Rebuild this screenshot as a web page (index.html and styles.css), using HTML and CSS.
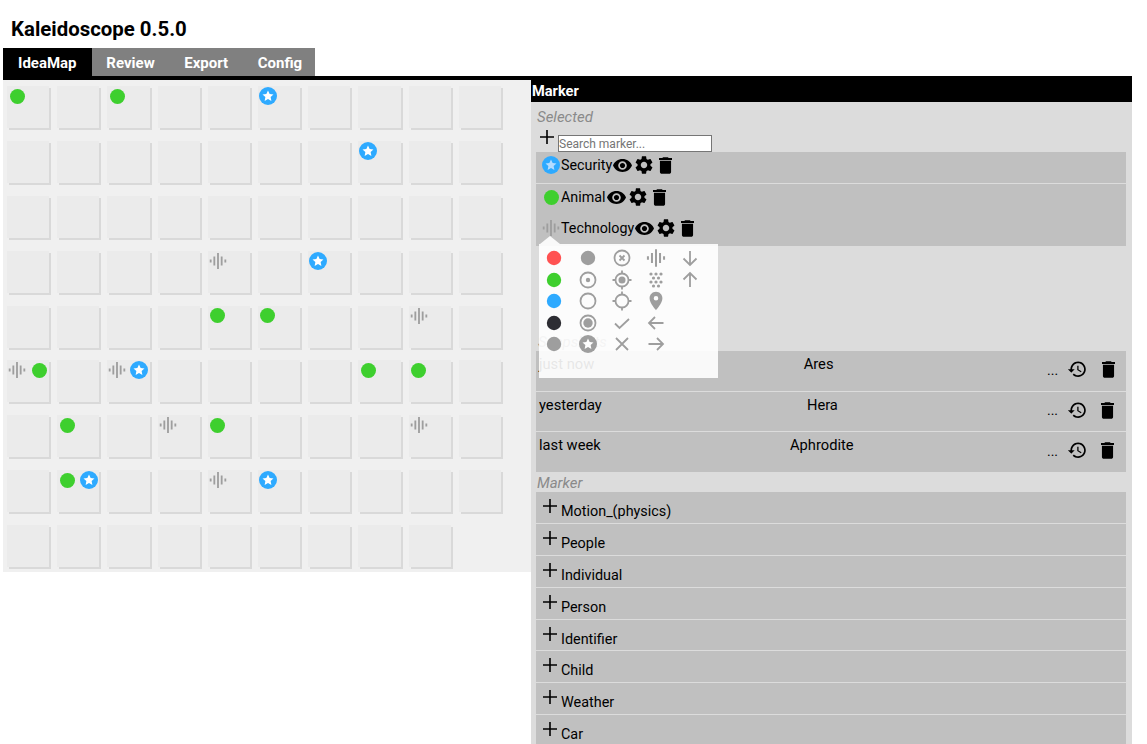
FILE: index.html
```html
<!DOCTYPE html>
<html lang="en">
<head>
    <meta charset="UTF-8">
    <meta name="viewport" content="width=device-width, initial-scale=1.0">
    <title>Kaleidoscope 0.5.0</title>

    <link rel="stylesheet" href="styles.css">

</head>
<body>

    <!-- Shared icons -->
    <svg class="sprite" xmlns="http://www.w3.org/2000/svg">
        <symbol id="i-star" viewBox="0 0 24 24"><circle cx="12" cy="12" r="12"/><path class="star-in" d="M12 4.600l2.200 4.700 5.100.6-3.800 3.500 1 5.100-4.500-2.500-4.500 2.500 1-5.100-3.800-3.500 5.100-.6z"/></symbol>
        <symbol id="i-wave" viewBox="0 0 24 24"><path d="M2.100 10.200h2.200v3.600H2.100zM6.500 6.500h2.200v11H6.500zM10.900 2.500h2.200v19h-2.200zM15.300 6.500h2.200v11h-2.200zM19.700 10.200h2.200v3.600h-2.200z"/></symbol>
        <symbol id="i-eye" viewBox="1 4.500 22 15"><path d="M12 4.500C7 4.500 2.730 7.610 1 12c1.730 4.390 6 7.500 11 7.500s9.270-3.110 11-7.500c-1.730-4.390-6-7.500-11-7.500zM12 17c-2.760 0-5-2.240-5-5s2.240-5 5-5 5 2.240 5 5-2.240 5-5 5zm0-8c-1.660 0-3 1.340-3 3s1.340 3 3 3 3-1.340 3-3-1.340-3-3-3z"/></symbol>
        <symbol id="i-gear" viewBox="2.300 2 19.400 20"><path d="M19.140 12.940c.04-.3.06-.61.06-.94 0-.32-.02-.64-.07-.94l2.030-1.580c.18-.14.23-.41.12-.61l-1.920-3.320c-.12-.22-.37-.29-.59-.22l-2.390.96c-.5-.38-1.030-.7-1.620-.94l-.36-2.540c-.04-.24-.24-.41-.48-.41h-3.840c-.24 0-.43.17-.47.41l-.36 2.540c-.59.24-1.130.57-1.620.94l-2.390-.96c-.22-.08-.47 0-.59.22L2.740 8.870c-.12.21-.08.47.12.61l2.030 1.580c-.05.3-.09.63-.09.94s.02.64.07.94l-2.030 1.580c-.18.14-.23.41-.12.61l1.920 3.320c.12.22.37.29.59.22l2.390-.96c.5.38 1.030.7 1.620.94l.36 2.540c.05.24.24.41.48.41h3.840c.24 0 .44-.17.47-.41l.36-2.540c.59-.24 1.130-.56 1.620-.94l2.390.96c.22.08.47 0 .59-.22l1.920-3.320c.12-.22.07-.47-.12-.61l-2.010-1.580zM12 15.600c-1.980 0-3.600-1.620-3.600-3.600s1.620-3.600 3.600-3.600 3.600 1.620 3.600 3.600-1.620 3.600-3.600 3.600z"/></symbol>
        <symbol id="i-trash" viewBox="5 3 14 18"><path d="M6 19c0 1.100.9 2 2 2h8c1.100 0 2-.9 2-2V7H6v12zM19 4h-3.500l-1-1h-5l-1 1H5v2h14V4z"/></symbol>
        <symbol id="i-history" viewBox="0 0 24 24"><path d="M13 3c-4.970 0-9 4.030-9 9H1l3.890 3.890.07.14L9 12H6c0-3.870 3.130-7 7-7s7 3.130 7 7-3.130 7-7 7c-1.930 0-3.680-.79-4.940-2.060l-1.420 1.420C8.270 19.990 10.510 21 13 21c4.970 0 9-4.030 9-9s-4.030-9-9-9zm-1 5v5l4.280 2.540.72-1.210-3.500-2.080V8H12z"/></symbol>
        <symbol id="i-plus" viewBox="0 0 16 16"><path d="M7.200 1h1.600v6.200H15v1.600H8.800V15H7.200V8.800H1V7.200h6.200z"/></symbol>
    </svg>

    <h1 class="title">Kaleidoscope 0.5.0</h1>

    <nav class="tabs">
        <a class="tab tab-active">IdeaMap</a>
        <a class="tab">Review</a>
        <a class="tab">Export</a>
        <a class="tab">Config</a>
    </nav>

    <div class="main">
        <!-- Idea grid, tiles are inserted by JavaScript -->
        <div class="board" id="board"></div>

        <div class="side">
            <div class="side-head">Marker</div>
            <div class="side-body">
                <div class="label">Selected</div>
                <div class="search-row">
                    <svg class="icon-plus"><use href="#i-plus"/></svg>
                    <input class="search" type="text" placeholder="Search marker...">
                </div>

                <div class="selected-list">
                    <div class="selected-row sep">
                        <span class="ic-box"><svg class="mark-star"><use href="#i-star"/></svg></span>
                        <span>Security</span>
                        <svg class="act-eye"><use href="#i-eye"/></svg>
                        <svg class="act-gear"><use href="#i-gear"/></svg>
                        <svg class="act-trash"><use href="#i-trash"/></svg>
                    </div>
                    <div class="selected-row">
                        <span class="ic-box"><i class="dot"></i></span>
                        <span>Animal</span>
                        <svg class="act-eye"><use href="#i-eye"/></svg>
                        <svg class="act-gear"><use href="#i-gear"/></svg>
                        <svg class="act-trash"><use href="#i-trash"/></svg>
                    </div>
                    <div class="selected-row">
                        <span class="ic-box"><svg class="mark-wave"><use href="#i-wave"/></svg></span>
                        <span>Technology</span>
                        <svg class="act-eye"><use href="#i-eye"/></svg>
                        <svg class="act-gear"><use href="#i-gear"/></svg>
                        <svg class="act-trash"><use href="#i-trash"/></svg>
                    </div>

                    <!-- Marker shape picker -->
                    <div class="picker">
                        <svg viewBox="0 0 22 22"><circle cx="11" cy="11" r="7.200" fill="#ff5252"/></svg>
                        <svg viewBox="0 0 22 22"><circle cx="11" cy="11" r="7.200" fill="#9e9e9e"/></svg>
                        <svg class="p" viewBox="0 0 22 22"><circle cx="11" cy="11" r="7.500"/><path d="M8.500 8.500l5 5M13.500 8.500l-5 5"/></svg>
                        <svg class="p-fill" viewBox="0 0 24 24"><use href="#i-wave"/></svg>
                        <svg class="p" viewBox="0 0 22 22"><path d="M11 4v14M4.500 11.500l6.500 6.500 6.500-6.500"/></svg>

                        <svg viewBox="0 0 22 22"><circle cx="11" cy="11" r="7.200" fill="#3ecf2e"/></svg>
                        <svg class="p" viewBox="0 0 22 22"><circle cx="11" cy="11" r="7.500"/><circle class="solid" cx="11" cy="11" r="2.200"/></svg>
                        <svg class="p" viewBox="0 0 22 22"><circle cx="11" cy="11" r="6.500"/><circle class="solid" cx="11" cy="11" r="3.500"/><path d="M11 1.500v3M11 17.500v3M1.500 11h3M17.500 11h3"/></svg>
                        <svg class="p-fill" viewBox="0 0 22 22"><circle cx="6" cy="5" r="1.600"/><circle cx="11" cy="5" r="1.600"/><circle cx="16" cy="5" r="1.600"/><circle cx="8.500" cy="9" r="1.600"/><circle cx="13.500" cy="9" r="1.600"/><circle cx="6" cy="13" r="1.600"/><circle cx="11" cy="13" r="1.600"/><circle cx="16" cy="13" r="1.600"/><circle cx="8.500" cy="17" r="1.600"/><circle cx="13.500" cy="17" r="1.600"/></svg>
                        <svg class="p" viewBox="0 0 22 22"><path d="M11 18V4M4.500 10.500L11 4l6.500 6.500"/></svg>

                        <svg viewBox="0 0 22 22"><circle cx="11" cy="11" r="7.200" fill="#2eaaff"/></svg>
                        <svg class="p" viewBox="0 0 22 22"><circle cx="11" cy="11" r="7.500"/></svg>
                        <svg class="p" viewBox="0 0 22 22"><circle cx="11" cy="11" r="6.500"/><path d="M11 1.500v3M11 17.500v3M1.500 11h3M17.500 11h3"/></svg>
                        <svg class="p-fill" viewBox="0 0 24 24"><path d="M12 2C8.130 2 5 5.130 5 9c0 5.250 7 13 7 13s7-7.750 7-13c0-3.870-3.130-7-7-7zm0 9.500a2.500 2.500 0 1 1 0-5 2.500 2.500 0 0 1 0 5z"/></svg>
                        <span></span>

                        <svg viewBox="0 0 22 22"><circle cx="11" cy="11" r="7.200" fill="#2d2d33"/></svg>
                        <svg class="p" viewBox="0 0 22 22"><circle cx="11" cy="11" r="7.500"/><circle class="solid" cx="11" cy="11" r="4.700"/></svg>
                        <svg class="p" viewBox="0 0 22 22"><path d="M4 11.500l4.500 4.500L18 7"/></svg>
                        <svg class="p" viewBox="0 0 22 22"><path d="M18.500 11H4M10 5l-6 6 6 6"/></svg>
                        <span></span>

                        <svg viewBox="0 0 22 22"><circle cx="11" cy="11" r="7.200" fill="#9e9e9e"/></svg>
                        <svg class="p-star" viewBox="0 0 24 24"><use href="#i-star"/></svg>
                        <svg class="p" viewBox="0 0 22 22"><path d="M5 5l12 12M17 5L5 17"/></svg>
                        <svg class="p" viewBox="0 0 22 22"><path d="M3.500 11H18M12 5l6 6-6 6"/></svg>
                        <span></span>
                    </div>
                </div>

                <div class="label label-snapshots">Snapshots</div>
                <div class="snap-list">
                    <div class="snap-row sep">
                        <span class="snap-text">just now</span>
                        <span class="snap-text">Ares</span>
                        <div class="snap-actions">
                            <span class="snap-more">...</span>
                            <svg class="act-history"><use href="#i-history"/></svg>
                            <svg class="act-trash"><use href="#i-trash"/></svg>
                        </div>
                    </div>
                    <div class="snap-row sep">
                        <span class="snap-text">yesterday</span>
                        <span class="snap-text">Hera</span>
                        <div class="snap-actions">
                            <span class="snap-more">...</span>
                            <svg class="act-history"><use href="#i-history"/></svg>
                            <svg class="act-trash"><use href="#i-trash"/></svg>
                        </div>
                    </div>
                    <div class="snap-row">
                        <span class="snap-text">last week</span>
                        <span class="snap-text">Aphrodite</span>
                        <div class="snap-actions">
                            <span class="snap-more">...</span>
                            <svg class="act-history"><use href="#i-history"/></svg>
                            <svg class="act-trash"><use href="#i-trash"/></svg>
                        </div>
                    </div>
                </div>

                <div class="label label-marker">Marker</div>
                <div id="markerList"></div>
            </div>
        </div>
    </div>

    <script>
        // Which markers sit on which tile, "row,col": [...]
        const placed = {
            "0,0": ["dot"], "0,2": ["dot"], "0,5": ["star"],
            "1,7": ["star"],
            "3,4": ["wave"], "3,6": ["star"],
            "4,4": ["dot"], "4,5": ["dot"], "4,8": ["wave"],
            "5,0": ["wave", "dot"], "5,2": ["wave", "star"], "5,7": ["dot"], "5,8": ["dot"],
            "6,1": ["dot"], "6,3": ["wave"], "6,4": ["dot"], "6,8": ["wave"],
            "7,1": ["dot", "star"], "7,4": ["wave"], "7,5": ["star"]
        };

        const marks = {
            dot: '<span class="ic-box"><i class="dot"></i></span>',
            star: '<span class="ic-box"><svg class="mark-star"><use href="#i-star"/></svg></span>',
            wave: '<span class="ic-box"><svg class="mark-wave"><use href="#i-wave"/></svg></span>'
        };

        const board = document.getElementById("board");
        for (let r = 0; r < 9; r++) {
            for (let c = 0; c < 10; c++) {
                if (r === 8 && c === 9) continue;
                const tile = document.createElement("div");
                tile.className = "tile";
                tile.innerHTML = (placed[r + "," + c] || []).map(m => marks[m]).join("");
                board.appendChild(tile);
            }
        }

        const names = ["Motion_(physics)", "People", "Individual", "Person", "Identifier", "Child", "Weather", "Car"];
        const markerList = document.getElementById("markerList");
        names.forEach(name => {
            const row = document.createElement("div");
            row.className = "marker-row";
            row.innerHTML = `<svg class="icon-plus"><use href="#i-plus"/></svg><span>${name}</span>`;
            markerList.appendChild(row);
        });
    </script>
</body>
</html>
```

FILE: styles.css
```css
html, body {
    height: 100%;
    overflow: hidden;
}

body {
    font-family: Roboto, "Noto Sans", sans-serif;
    font-size: 14.3px;
    color: #000;
    background-color: #fff;
    margin: 0;
    padding: 0 15px 0 3px;
}

.sprite {
    display: none;
}

.title {
    font-size: 20.4px;
    font-weight: 700;
    line-height: 24px;
    margin: 0;
    padding: 17px 0 7px 8px;
}

.tabs {
    display: flex;
    width: 312px;
    height: 28px;
    background-color: #808080;
}

.tab {
    color: #fff;
    font-size: 15px;
    font-weight: 700;
    line-height: 31px;
    padding: 0 14.8px;
}

.tab-active {
    background-color: #000;
    padding: 0 15px;
}

.main {
    display: flex;
    align-items: flex-start;
    border-top: 4px solid #000;
}

.board {
    width: 528px;
    box-sizing: border-box;
    padding: 6px 0 0 4px;
    height: 492px;
    flex: none;
    display: grid;
    grid-template-columns: repeat(10, 44.2px);
    grid-auto-rows: 44px;
    column-gap: 6px;
    row-gap: 10.9px;
    background-color: #f0f0f0;
}

.tile {
    display: flex;
    gap: 2px;
    align-items: flex-start;
    margin: 0 2px 2px 0;
    background-color: #ebebeb;
    box-shadow: 2px 2px 0 #d9d9d9;
}

.ic-box {
    width: 20px;
    height: 20px;
    flex: none;
    display: flex;
    align-items: center;
    justify-content: center;
}

.dot {
    display: block;
    width: 15px;
    height: 15px;
    border-radius: 50%;
    background-color: #3ecf2e;
}

.star-in {
    fill: var(--star, #fff);
}

.mark-star {
    width: 18px;
    height: 18px;
    fill: #2eaaff;
}

.mark-wave {
    width: 20px;
    height: 20px;
    fill: #9e9e9e;
}

.side {
    flex: 1;
    margin-top: -4px;
    background-color: #dcdcdc;
}

.side-head {
    background-color: #000;
    color: #fff;
    font-size: 14.6px;
    font-weight: 700;
    line-height: 22px;
    padding: 4px 0 0 1px;
}

.side-body {
    padding: 0 6px 0 5px;
}

.label {
    color: #8a8a8a;
    font-style: italic;
    font-size: 15px;
    line-height: 18px;
    padding: 6px 0 0 1px;
}

.search-row {
    display: flex;
    align-items: flex-start;
    height: 26px;
    padding-left: 3px;
    box-sizing: border-box;
}

.search-row .icon-plus {
    margin: 3px 3px 0 0;
}

.icon-plus {
    width: 16px;
    height: 16px;
    flex: none;
    fill: #000;
}

.search {
    width: 154px;
    height: 17px;
    box-sizing: border-box;
    margin: 9px 0 0 0;
    padding: 0;
    border: 1px solid #767676;
    background-color: #fff;
    font-family: Roboto, sans-serif;
    font-size: 12px;
}

.selected-list {
    position: relative;
    background-color: #c0c0c0;
}

.selected-row {
    --star: #b5dcff;
    display: flex;
    align-items: center;
    height: 31px;
    padding: 0 0 5px 5px;
    box-sizing: border-box;
}

.selected-row.sep {
    height: 32px;
    border-bottom: 1px solid #dcdcdc;
}

.act-eye {
    width: 19px;
    height: 13px;
    margin-left: 1px;
}

.act-gear {
    width: 18px;
    height: 18px;
    margin-left: 3px;
}

.act-trash {
    width: 13px;
    height: 17px;
    margin-left: 6px;
}

.picker {
    position: absolute;
    left: 3px;
    top: 92px;
    width: 179px;
    height: 134px;
    box-sizing: border-box;
    padding-top: 3.5px;
    display: grid;
    grid-template-columns: repeat(5, 30px);
    grid-auto-rows: 21.5px;
    column-gap: 4px;
    background-color: rgba(255, 255, 255, 0.9);
}

.picker::before {
    content: "";
    position: absolute;
    left: 1px;
    top: -8px;
    border-left: 10px solid transparent;
    border-right: 10px solid transparent;
    border-bottom: 8px solid rgba(255, 255, 255, 0.9);
}

.picker svg {
    width: 22px;
    height: 22px;
    justify-self: center;
    align-self: center;
}

.picker .p {
    fill: none;
    stroke: #9e9e9e;
    stroke-width: 1.8;
}

.picker .p .solid {
    fill: #9e9e9e;
    stroke: none;
}

.picker .p-fill {
    fill: #9e9e9e;
}

.picker .p-star {
    --star: #fff;
    fill: #9e9e9e;
    width: 18px;
    height: 18px;
}

.label-snapshots {
    margin-top: 87px;
    padding: 0 0 0 2px;
}

.snap-list {
    background-color: #c0c0c0;
}

.snap-row {
    display: flex;
    justify-content: space-between;
    align-items: center;
    height: 40px;
    padding-left: 3px;
    box-sizing: border-box;
    font-size: 14.7px;
}

.snap-row.sep {
    border-bottom: 1px solid #dcdcdc;
}

.snap-row:first-child {
    height: 41px;
}

.snap-text {
    margin-top: -14px;
}

.snap-actions {
    display: flex;
    align-items: center;
    width: 83px;
    margin-top: -3px;
}

.snap-more {
    margin-left: 4px;
    width: 11px;
    font-size: 14px;
}

.act-history {
    width: 20.5px;
    height: 20.5px;
    margin-left: 9px;
}

.snap-actions .act-trash {
    margin-left: 14px;
}

.label-marker {
    padding: 2px 0 0 1px;
}

.marker-row {
    display: flex;
    align-items: flex-start;
    height: 31.9px;
    box-sizing: border-box;
    padding: 6px 0 0 6px;
    background-color: #c0c0c0;
    border-bottom: 1px solid #dcdcdc;
}

.marker-row span {
    margin: 5px 0 0 3px;
    font-size: 14.4px;
}
```
